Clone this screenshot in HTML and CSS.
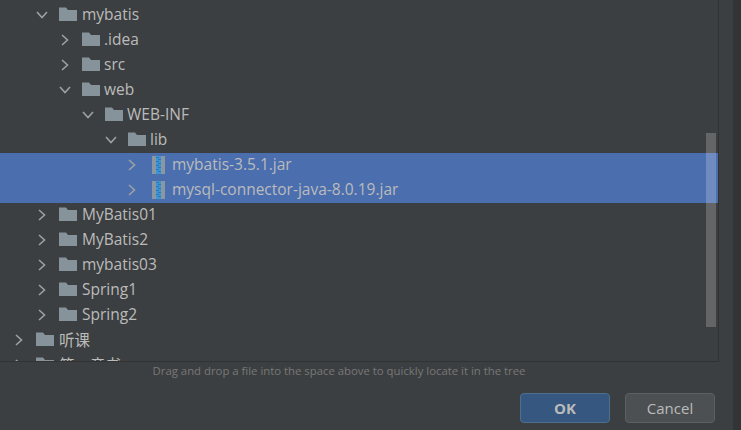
FILE: index.html
```html
<!DOCTYPE html>
<html>
<head>
    <title>Choose Library Files</title>
    <link rel="stylesheet" href="styles.css">
</head>
<body>
    <svg class="defs" width="0" height="0">
        <symbol id="folder" viewBox="0 0 18 14">
            <path d="M0 0.5 H7 L9 3 H18 V14 H0 Z" fill="#87939a"/>
        </symbol>
        <symbol id="right" viewBox="0 0 10 12">
            <path d="M2 1 L7.5 6 L2 11" fill="none" stroke="#9da1a3" stroke-width="1.6"/>
        </symbol>
        <symbol id="down" viewBox="0 0 12 10">
            <path d="M1 2 L6 7.5 L11 2" fill="none" stroke="#9da1a3" stroke-width="1.6"/>
        </symbol>
        <symbol id="jar" viewBox="0 0 13 18">
            <rect x="0" y="0" width="13" height="18" fill="#8a97a0"/>
            <rect x="4" y="0" width="5" height="18" fill="#3a97d4"/>
            <path d="M4 1.5 h3 M6 3.5 h3 M4 5.5 h3 M6 7.5 h3 M4 9.5 h3 M6 11.5 h3 M4 13.5 h3 M6 15.5 h3" stroke="#3174bd" stroke-width="1"/>
        </symbol>
    </svg>

    <div class="dialog">
        <div class="tree-panel">
            <div class="row depth-1"><svg class="arrow"><use href="#down"/></svg><svg class="folder"><use href="#folder"/></svg><span>mybatis</span></div>
            <div class="row depth-2"><svg class="arrow"><use href="#right"/></svg><svg class="folder"><use href="#folder"/></svg><span>.idea</span></div>
            <div class="row depth-2"><svg class="arrow"><use href="#right"/></svg><svg class="folder"><use href="#folder"/></svg><span>src</span></div>
            <div class="row depth-2"><svg class="arrow"><use href="#down"/></svg><svg class="folder"><use href="#folder"/></svg><span>web</span></div>
            <div class="row depth-3"><svg class="arrow"><use href="#down"/></svg><svg class="folder"><use href="#folder"/></svg><span>WEB-INF</span></div>
            <div class="row depth-4"><svg class="arrow"><use href="#down"/></svg><svg class="folder"><use href="#folder"/></svg><span>lib</span></div>
            <div class="row depth-5 selected"><svg class="arrow"><use href="#right"/></svg><svg class="jar"><use href="#jar"/></svg><span>mybatis-3.5.1.jar</span></div>
            <div class="row depth-5 selected"><svg class="arrow"><use href="#right"/></svg><svg class="jar"><use href="#jar"/></svg><span>mysql-connector-java-8.0.19.jar</span></div>
            <div class="row depth-1"><svg class="arrow"><use href="#right"/></svg><svg class="folder"><use href="#folder"/></svg><span>MyBatis01</span></div>
            <div class="row depth-1"><svg class="arrow"><use href="#right"/></svg><svg class="folder"><use href="#folder"/></svg><span>MyBatis2</span></div>
            <div class="row depth-1"><svg class="arrow"><use href="#right"/></svg><svg class="folder"><use href="#folder"/></svg><span>mybatis03</span></div>
            <div class="row depth-1"><svg class="arrow"><use href="#right"/></svg><svg class="folder"><use href="#folder"/></svg><span>Spring1</span></div>
            <div class="row depth-1"><svg class="arrow"><use href="#right"/></svg><svg class="folder"><use href="#folder"/></svg><span>Spring2</span></div>
            <div class="row depth-0"><svg class="arrow"><use href="#right"/></svg><svg class="folder"><use href="#folder"/></svg><span>听课</span></div>
            <div class="row depth-0"><svg class="arrow"><use href="#right"/></svg><svg class="folder"><use href="#folder"/></svg><span>第一章书</span></div>
            <div class="scrollbar"></div>
        </div>
        <div class="hint">Drag and drop a file into the space above to quickly locate it in the tree</div>
        <div class="buttons">
            <button class="btn btn-ok">OK</button>
            <button class="btn">Cancel</button>
        </div>
    </div>
    <div class="edge"></div>
</body>
</html>
```

FILE: styles.css
```css
html, body {
    height: 100%;
}
body {
    margin: 0;
    display: flex;
    height: 430px;
    overflow: hidden;
    background-color: #3c3f41;
    font-family: "Open Sans", "Noto Sans CJK SC", sans-serif;
    color: #bbbbbb;
}
.defs {
    position: absolute;
}
.dialog {
    width: 733px;
    display: flex;
    flex-direction: column;
}
.edge {
    flex-grow: 1;
    background-color: #323436;
}
.tree-panel {
    position: relative;
    box-sizing: border-box;
    width: 719px;
    height: 362px;
    padding-top: 3px;
    overflow: hidden;
    border-right: 1px solid #323232;
    border-bottom: 1px solid #323232;
}
.row {
    display: flex;
    align-items: center;
    height: 25px;
    font-size: 15.5px;
    white-space: nowrap;
}
.row span {
    margin-left: 4px;
    margin-bottom: 3px;
}
.row .arrow, .row .jar {
    margin-bottom: 1px;
}
.row .folder {
    margin-bottom: 3px;
}
.depth-0 span, .depth-1 span {
    margin-left: 5px;
}
.depth-0 { padding-left: 13px; }
.depth-1 { padding-left: 36px; }
.depth-2 { padding-left: 59px; }
.depth-3 { padding-left: 82px; }
.depth-4 { padding-left: 105px; }
.depth-5 { padding-left: 126px; }
.selected {
    background-color: #4b6eaf;
}
.arrow {
    width: 12px;
    height: 12px;
    margin-right: 11px;
    flex-shrink: 0;
}
.depth-5 .arrow {
    margin-right: 14px;
}
.folder {
    width: 18px;
    height: 14px;
    flex-shrink: 0;
}
.jar {
    width: 13px;
    height: 18px;
    margin-right: 3px;
    flex-shrink: 0;
}
.scrollbar {
    position: absolute;
    top: 133px;
    left: 706px;
    width: 10px;
    height: 194px;
    background-color: rgba(255, 255, 255, 0.2);
}
.hint {
    width: 678px;
    text-align: center;
    font-size: 11.35px;
    line-height: 17px;
    color: #787878;
}
.buttons {
    display: flex;
    justify-content: flex-end;
    gap: 15px;
    width: 715px;
    margin-top: 14px;
}
.btn {
    box-sizing: border-box;
    width: 90px;
    height: 30px;
    border: 1px solid #5e6060;
    border-radius: 4px;
    background-color: #4c5052;
    color: #bbbbbb;
    font-family: inherit;
    font-size: 15px;
    padding: 0;
}
.btn-ok {
    background-color: #365880;
    border-color: #4c708c;
    font-weight: bold;
}
```
